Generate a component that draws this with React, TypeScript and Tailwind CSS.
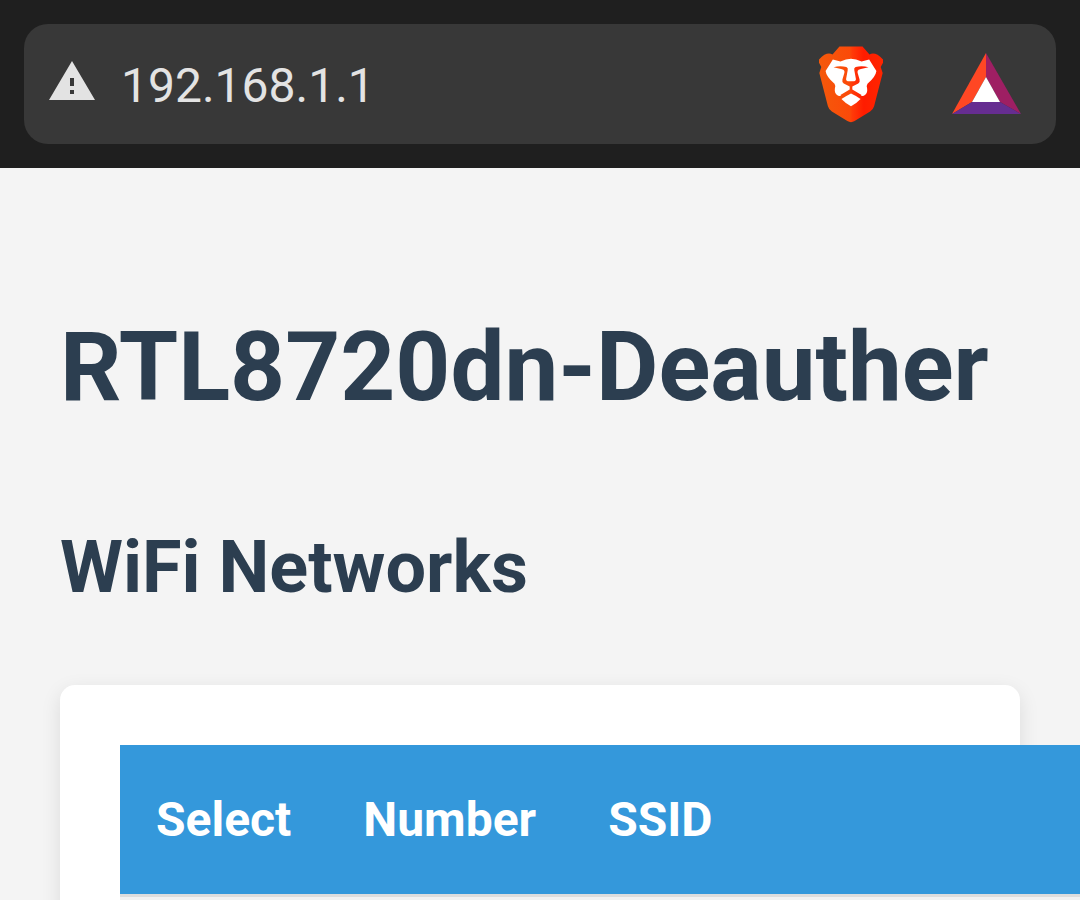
import React from "react";

const WarningIcon: React.FC = () => (
  <svg viewBox="0 0 46 46" className="w-[46px] h-[46px] shrink-0" aria-hidden="true">
    <path
      fill="#e3e3e3"
      fillRule="evenodd"
      d="M23 0L46 39H0ZM21 17V25H25V17ZM21 29V33H25V29Z"
    />
  </svg>
);

const BraveIcon: React.FC = () => (
  <svg viewBox="55 47 194 230" className="w-16 h-[77px]" aria-hidden="true">
    <defs>
      <linearGradient id="brave" gradientUnits="userSpaceOnUse" x1="55" x2="249" y1="0" y2="0">
        <stop offset="0" stopColor="#f4590b" />
        <stop offset="0.48" stopColor="#fb4a09" />
        <stop offset="0.52" stopColor="#ff3a08" />
        <stop offset="0.7" stopColor="#ff1c00" />
        <stop offset="1" stopColor="#ff2600" />
      </linearGradient>
    </defs>
    <path
      fill="url(#brave)"
      d="M117 47H187L208 71C218 65 232 67 249 86V96L242 109L248 127L222 228Q219 238 210 244L163 273Q152 280 141 273L94 244Q85 238 82 228L56 127L62 109L55 96V86C72 67 86 65 96 71Z"
    />
    <path
      fill="#fff"
      d="M97 86L120 92Q137 84 152 84Q167 84 184 92L207 86L229 121Q227 138 202 160Q198 165 201 175Q203 190 191 196Q181 198 172 192L152 182L132 192Q123 198 113 196Q101 190 103 175Q106 165 102 160Q77 138 75 121Z"
    />
    <path
      fill="url(#brave)"
      d="M99 110Q118 104 138 109Q144 112 142 119L137 146Q137 151 142 152H162Q167 151 167 146L162 119Q160 112 166 109Q186 104 205 110L182 115Q173 117 172 121Q171 126 174 133L178 147Q180 155 174 159L156 168V177L184 194L179 200L152 186L125 200L120 194L148 177V168L130 159Q124 155 126 147L130 133Q133 126 132 121Q131 117 122 115Z"
    />
    <path fill="#fff" d="M123 206Q138 196 152 189Q166 195 181 206Q168 220 152 228Q136 220 123 206Z" />
  </svg>
);

const RewardsIcon: React.FC = () => (
  <svg viewBox="0 0 69 63" className="w-[69px] h-[63px]" aria-hidden="true">
    <path fill="#ff4724" d="M34 0V24L20 49L0 61Z" />
    <path fill="#9e1f63" d="M34 0L69 61L48 49L34 24Z" />
    <path fill="#662d91" d="M0 61L20 49H48L69 61Z" />
    <path fill="#fff" d="M34 24L48 49H20Z" />
  </svg>
);

const AddressBar: React.FC = () => (
  <header className="bg-[#1f1f1f] p-6">
    <div className="flex items-center h-[120px] rounded-3xl bg-[#383838] pl-[25px] pr-[35px]">
      <WarningIcon />
      <input
        type="text"
        aria-label="Address"
        defaultValue="192.168.1.1"
        className="flex-1 min-w-0 ml-[26px] pt-1 bg-transparent text-[48px] leading-[56px] text-[#e3e3e3] outline-none"
      />
      <button type="button" aria-label="Brave Shields" className="mr-[69px]">
        <BraveIcon />
      </button>
      <button type="button" aria-label="Brave Rewards">
        <RewardsIcon />
      </button>
    </div>
  </header>
);

const App: React.FC = () => {
  return (
    <div className="flex flex-col h-screen overflow-hidden bg-[#f4f4f4] font-[Roboto,sans-serif]">
      <AddressBar />

      <main className="flex-1 min-h-0 p-[60px] text-[#2c3e50]">
        <h1 className="mt-[60px] mb-16 text-[96px] leading-[158px] font-bold">RTL8720dn-Deauther</h1>
        <h2 className="my-[60px] text-[72px] leading-[115px] font-bold">WiFi Networks</h2>

        <div className="p-[60px] rounded-[15px] bg-white shadow-[0_6px_20px_rgba(0,0,0,0.1)]">
          <table className="w-max border-collapse text-left text-[48px] leading-[77px]">
            <thead>
              <tr className="bg-[#3498db] text-white border-b-3 border-[#ddd]">
                <th className="p-9 font-bold">Select</th>
                <th className="p-9 font-bold">Number</th>
                <th className="p-9 font-bold min-w-[720px]">SSID</th>
              </tr>
            </thead>
            <tbody>
              <tr className="h-[152px] bg-[#f2f2f2]">
                <td colSpan={3}></td>
              </tr>
            </tbody>
          </table>
        </div>
      </main>
    </div>
  );
};

export default App;
